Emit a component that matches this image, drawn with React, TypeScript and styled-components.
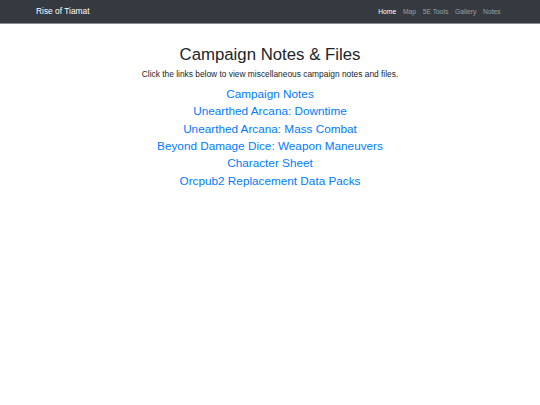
import React from 'react';
import styled, { createGlobalStyle } from 'styled-components';

const GlobalStyle = createGlobalStyle`
  html, body {
    margin: 0;
    padding: 0;
    background: #ffffff;
    font-family: "Liberation Sans", Arial, sans-serif;
    color: #212529;
  }
`;

const navItems = ['Home', 'Map', '5E Tools', 'Gallery', 'Notes'];

const links = [
  'Campaign Notes',
  'Unearthed Arcana: Downtime',
  'Unearthed Arcana: Mass Combat',
  'Beyond Damage Dice: Weapon Maneuvers',
  'Character Sheet',
  'Orcpub2 Replacement Data Packs',
];

const App: React.FC = () => {
  return (
    <>
      <GlobalStyle />
      <Navbar>
        <NavInner>
          <Brand href="#">Rise of Tiamat</Brand>
          <NavList>
            {navItems.map((item, i) => (
              <NavLink key={item} href="#" $active={i === 0}>
                {item}
              </NavLink>
            ))}
          </NavList>
        </NavInner>
      </Navbar>
      <Main>
        <Title>Campaign Notes &amp; Files</Title>
        <Lead>Click the links below to view miscellaneous campaign notes and files.</Lead>
        {links.map((link) => (
          <LinkHeading key={link}>
            <FileLink href="#">{link}</FileLink>
          </LinkHeading>
        ))}
      </Main>
    </>
  );
};

export default App;

const Navbar = styled.nav`
  background: #343a40;
  height: 23px;
  border-bottom: 1px solid #8a8d90;
`;

const NavInner = styled.div`
  display: flex;
  align-items: center;
  justify-content: space-between;
  height: 100%;
  padding: 0 36px;
`;

const Brand = styled.a`
  color: #ffffff;
  font-size: 8.4px;
  text-decoration: none;
  padding-bottom: 1px;
`;

const NavList = styled.div`
  display: flex;
  align-items: center;
`;

const NavLink = styled.a<{ $active?: boolean }>`
  color: ${(p) => (p.$active ? '#ffffff' : 'rgba(255, 255, 255, 0.5)')};
  font-size: 6.72px;
  padding: 0 3.36px;
  text-decoration: none;
  padding-bottom: 1px;
`;

const Main = styled.main`
  display: flex;
  flex-direction: column;
  align-items: center;
  padding-top: 21px;
`;

const Title = styled.h1`
  margin: 0 0 3px;
  font-size: 16.8px;
  font-weight: 500;
  line-height: 1.2;
  color: #212529;
`;

const Lead = styled.p`
  margin: 0 0 5.8px;
  font-size: 8.4px;
  line-height: 1.5;
  color: #212529;
`;

const LinkHeading = styled.h3`
  margin: 0 0 3.36px;
  font-size: 11.76px;
  font-weight: 500;
  line-height: 1.2;
`;

const FileLink = styled.a`
  color: #007bff;
  text-decoration: none;
`;
